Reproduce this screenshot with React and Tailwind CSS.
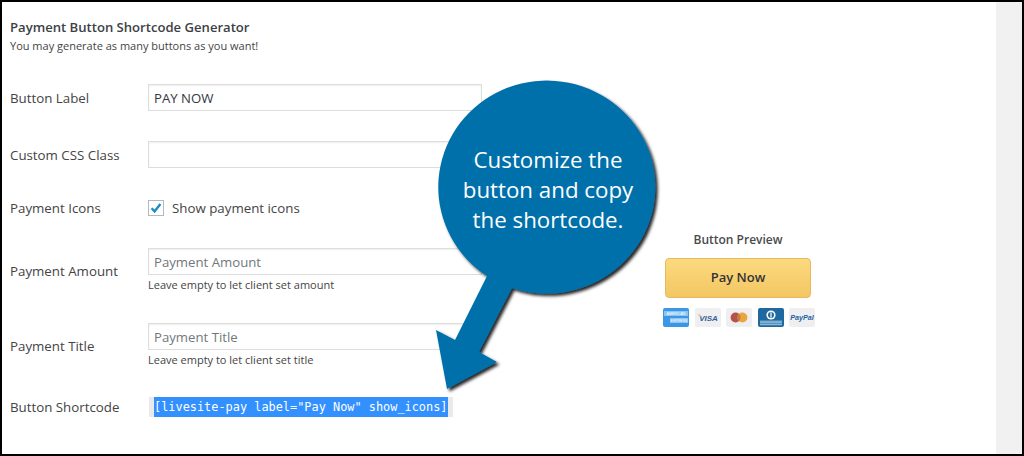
import React from "react";

const inputClass =
  "block h-[27px] w-[334px] border border-[#dddddd] bg-white px-[5px] text-[13.2px] text-[#32373c] shadow-[inset_0_1px_2px_rgba(0,0,0,0.07)] outline-none placeholder:text-[#72777c]";

const Label = ({ children }) => <div className="w-[138px] shrink-0 text-[13.3px] leading-[18px] text-[#444444]">{children}</div>;

const Hint = ({ children }) => <p className="mt-[1px] text-[11px] leading-[18px] text-[#444444]">{children}</p>;

const CardAmex = () => (
  <svg width="26" height="19" viewBox="0 0 26 19">
    <rect width="26" height="19" rx="2" fill="#3a96e6" />
    <rect x="1" y="3" width="24" height="5" fill="#8cc4f2" />
    <rect x="7" y="10" width="18" height="5" fill="#8cc4f2" />
    <text x="13" y="7.4" textAnchor="middle" fontSize="3.6" fill="#fff" fontFamily="Liberation Sans, sans-serif">AMERICAN</text>
    <text x="16" y="14.4" textAnchor="middle" fontSize="3.6" fill="#fff" fontFamily="Liberation Sans, sans-serif">EXPRESS</text>
  </svg>
);

const CardVisa = () => (
  <svg width="26" height="19" viewBox="0 0 26 19">
    <rect width="26" height="19" rx="2" fill="#efeff1" />
    <text x="13.5" y="13" textAnchor="middle" fontSize="8" fontWeight="700" fontStyle="italic" fill="#2f5f96" fontFamily="Liberation Sans, sans-serif">VISA</text>
    <path d="M2.5 6.5 L5 6.5 L6 9 Z" fill="#e3b25c" />
  </svg>
);

const CardMaster = () => (
  <svg width="26" height="19" viewBox="0 0 26 19">
    <rect width="26" height="19" rx="2" fill="#efeff1" />
    <circle cx="9.6" cy="9.5" r="5" fill="#b5524a" />
    <circle cx="16.4" cy="9.5" r="5" fill="#e9a63e" />
    <path d="M13 5.8 A5 5 0 0 1 13 13.2 A5 5 0 0 1 13 5.8 Z" fill="#c4803f" />
  </svg>
);

const CardDiners = () => (
  <svg width="26" height="19" viewBox="0 0 26 19">
    <rect width="26" height="19" rx="2" fill="#1e6aa0" />
    <circle cx="13" cy="7" r="4.6" fill="#ffffff" />
    <circle cx="13" cy="7" r="3" fill="#1e6aa0" />
    <rect x="12.4" y="4.4" width="1.2" height="5.2" fill="#ffffff" />
    <rect x="2" y="12.6" width="22" height="3" fill="#7fb0d2" />
    <rect x="2" y="16.2" width="22" height="1" fill="#a9c9e0" />
  </svg>
);

const CardPaypal = () => (
  <svg width="26" height="19" viewBox="0 0 26 19">
    <rect width="26" height="19" rx="2" fill="#efeff1" />
    <text x="13" y="12" textAnchor="middle" fontSize="7.2" fontWeight="700" fontStyle="italic" fill="#2462a4" fontFamily="Liberation Sans, sans-serif">PayPal</text>
  </svg>
);

// blue speech bubble with the arrow pointing at the shortcode
const Callout = () => (
  <div className="absolute left-[420px] top-[70px] h-[330px] w-[250px]">
    <svg width="250" height="330" viewBox="420 70 250 330" className="absolute left-0 top-0">
      <defs>
        <filter id="bubbleShadow" x="-10%" y="-10%" width="125%" height="125%">
          <feDropShadow dx="2.5" dy="2.5" stdDeviation="1.6" floodColor="#000000" floodOpacity="0.85" />
        </filter>
      </defs>
      <path
        d="M487 276 A108.5 106.5 0 1 1 512 288 L479 352 L497 362 L447 389 L436 330 L455 340 Z"
        fill="#006fab"
        filter="url(#bubbleShadow)"
      />
    </svg>
    <div className="absolute left-[28px] top-[75px] w-[200px] text-center font-['Open_Sans',sans-serif] text-[22.3px] leading-[30px] text-white">
      Customize the
      <br />
      button and copy
      <br />
      the shortcode.
    </div>
  </div>
);

export default function App() {
  return (
    <div className="relative flex h-[456px] w-[1024px] overflow-hidden border-b-2 border-l-2 border-r-2 border-t-2 border-black bg-white font-['Open_Sans',sans-serif]">
      <div className="flex flex-1">
        <div className="w-[480px] shrink-0 pl-[8px] pt-[16px]">
          <h2 className="text-[13.1px] font-semibold leading-[18px] text-[#3c4146]">Payment Button Shortcode Generator</h2>
          <p className="mt-[1px] text-[11px] leading-[18px] text-[#444444]">You may generate as many buttons as you want!</p>

          <div className="mt-[29px] flex items-center">
            <Label>Button Label</Label>
            <input readOnly value="PAY NOW" className={inputClass} />
          </div>

          <div className="mt-[30px] flex items-center">
            <Label>Custom CSS Class</Label>
            <input readOnly className={inputClass} />
          </div>

          <div className="mt-[31px] flex items-center">
            <Label>Payment Icons</Label>
            <span className="flex h-[16px] w-[16px] items-center justify-center border border-[#b4b9be] bg-white">
              <svg width="14" height="14" viewBox="0 0 14 14">
                <path d="M2.6 7.2 L5.6 10.4 L11.4 3" fill="none" stroke="#1e8cbe" strokeWidth="2.4" />
              </svg>
            </span>
            <span className="ml-[8px] text-[13.3px] leading-[18px] text-[#444444]">Show payment icons</span>
          </div>

          <div className="mt-[31px] flex items-center">
            <Label>Payment Amount</Label>
            <div>
              <input readOnly placeholder="Payment Amount" className={inputClass} />
              <Hint>Leave empty to let client set amount</Hint>
            </div>
          </div>

          <div className="mt-[29px] flex items-center">
            <Label>Payment Title</Label>
            <div>
              <input readOnly placeholder="Payment Title" className={inputClass} />
              <Hint>Leave empty to let client set title</Hint>
            </div>
          </div>

          <div className="mt-[28px] flex items-center">
            <div className="w-[139px] shrink-0 text-[13.3px] leading-[18px] text-[#444444]">Button Shortcode</div>
            <code className="h-[20px] bg-[#eaeaea] px-[5px] font-['DejaVu_Sans_Mono',monospace] text-[11.9px] leading-[20px] text-white">
              <span className="block h-[20px] bg-[#3390ff] whitespace-pre">[livesite-pay label="Pay Now" show_icons]</span>
            </code>
          </div>
        </div>

        <div className="ml-[180px] w-[154px] shrink-0 pt-[229px]">
          <p className="pr-[2px] text-center text-[12px] font-semibold leading-[18px] text-[#4a4a4a]">Button Preview</p>
          <button
            type="button"
            className="ml-[3px] mt-[9px] block h-[40px] w-[146px] rounded-[4px] border border-[#e8b95a] bg-linear-to-b from-[#fcd97f] to-[#f3c663] text-[13px] font-semibold text-[#333333]"
          >
            Pay Now
          </button>
          <div className="mt-[10px] flex justify-between pl-[1px] pr-[1px]">
            <CardAmex />
            <CardVisa />
            <CardMaster />
            <CardDiners />
            <CardPaypal />
          </div>
        </div>
      </div>

      <div className="w-[26px] shrink-0 bg-[#f1f1f1]" />

      <div className="absolute -left-[2px] -top-[2px]">
        <Callout />
      </div>
    </div>
  );
}
